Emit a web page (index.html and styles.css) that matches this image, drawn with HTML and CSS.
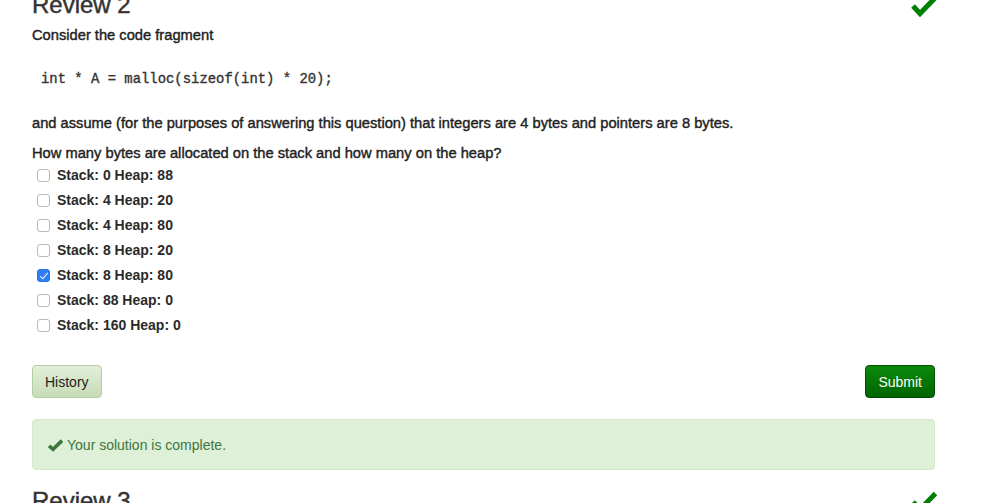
FILE: index.html
```html
<!DOCTYPE html>
<html>
<head>
<meta charset="utf-8">
<link rel="stylesheet" href="styles.css">
</head>
<body>
<div class="page">
  <section class="question">
    <div class="q-head">
      <h2 class="q-title">Review 2</h2>
      <svg class="done-icon" width="26" height="26" viewBox="0 0 26 26"><polyline points="2,14 9,21.5 24.5,5.5" fill="none" stroke="#008000" stroke-width="5" stroke-linejoin="miter"/></svg>
    </div>
    <p class="lead">Consider the code fragment</p>
    <pre class="code">int * A = malloc(sizeof(int) * 20);</pre>
    <p class="para">and assume (for the purposes of answering this question) that integers are 4 bytes and pointers are 8 bytes.</p>
    <p class="para ask">How many bytes are allocated on the stack and how many on the heap?</p>
    <div class="options">
      <label class="opt"><input type="checkbox"><span>Stack: 0 Heap: 88</span></label>
      <label class="opt"><input type="checkbox"><span>Stack: 4 Heap: 20</span></label>
      <label class="opt"><input type="checkbox"><span>Stack: 4 Heap: 80</span></label>
      <label class="opt"><input type="checkbox"><span>Stack: 8 Heap: 20</span></label>
      <label class="opt"><input type="checkbox" checked><span>Stack: 8 Heap: 80</span></label>
      <label class="opt"><input type="checkbox"><span>Stack: 88 Heap: 0</span></label>
      <label class="opt"><input type="checkbox"><span>Stack: 160 Heap: 0</span></label>
    </div>
    <div class="actions">
      <button class="btn btn-history">History</button>
      <button class="btn btn-submit">Submit</button>
    </div>
    <div class="alert">
      <svg class="alert-icon" width="15" height="13" viewBox="0 0 15 13"><polyline points="1,6.8 5,10.4 14,1.6" fill="none" stroke="#3c763d" stroke-width="3.6"/></svg>
      <span>Your solution is complete.</span>
    </div>
  </section>
  <section class="question">
    <div class="q-head">
      <h2 class="q-title">Review 3</h2>
      <svg class="done-icon" width="26" height="26" viewBox="0 0 26 26"><polyline points="2,14 9,21.5 24.5,5.5" fill="none" stroke="#008000" stroke-width="5" stroke-linejoin="miter"/></svg>
    </div>
  </section>
</div>
</body>
</html>
```
FILE: styles.css
```css
html, body {
  margin: 0;
  padding: 0;
  background: #fff;
}
body {
  font-family: "Liberation Sans", Arial, sans-serif;
  color: #333;
  font-size: 14px;
  line-height: 20px;
  overflow: hidden;
}
.page {
  width: 903px;
  margin: -8px 0 0 32px;
}
.q-head {
  display: flex;
  justify-content: space-between;
  align-items: flex-start;
}
.q-title {
  margin: 0;
  font-size: 24px;
  line-height: 26.4px;
  font-weight: normal;
  color: #333;
  -webkit-text-stroke: 0.45px #333;
}
.done-icon {
  display: block;
  margin-right: -2px;
}
.lead {
  margin: 7px 0 0;
  font-size: 14.7px;
  color: #222;
  -webkit-text-stroke: 0.4px #222;
}
.code {
  margin: 14px 0 0;
  padding: 10px 9px;
  font-family: "Liberation Mono", "Courier New", monospace;
  font-size: 13.9px;
  line-height: 20px;
  color: #333;
  -webkit-text-stroke: 0.35px #333;
}
.para {
  margin: 14px 0 0;
  font-size: 14.7px;
  color: #222;
  -webkit-text-stroke: 0.4px #222;
}
.ask {
  margin-top: 10px;
}
.options {
  margin-top: 2px;
  display: flex;
  flex-direction: column;
  gap: 5px;
}
.opt {
  display: flex;
  align-items: center;
  height: 20px;
  font-weight: bold;
  font-size: 14px;
  color: #2a2a2a;
}
.opt input {
  appearance: none;
  -webkit-appearance: none;
  margin: 0 7px 0 5px;
  width: 13px;
  height: 13px;
  border: 1px solid #b9b9b9;
  border-radius: 3px;
  background: #fff;
  box-sizing: border-box;
  position: relative;
}
.opt input:checked {
  background: #2f7ef5;
  border-color: #2a72e0;
}
.opt input:checked::after {
  content: "";
  position: absolute;
  left: 3.5px;
  top: 1px;
  width: 3px;
  height: 7px;
  border: solid #fff;
  border-width: 0 1.5px 1.5px 0;
  transform: rotate(40deg);
}
.actions {
  margin-top: 30px;
  display: flex;
  justify-content: space-between;
}
.btn {
  font-family: "Liberation Sans", Arial, sans-serif;
  font-size: 14px;
  line-height: 19px;
  padding: 7px 12px 5px;
  border-radius: 4px;
  border: 1px solid;
  cursor: pointer;
}
.btn-history {
  color: #222;
  background: linear-gradient(#e3efda, #c6dcb6);
  border-color: #b2cda2;
}
.btn-submit {
  color: #fff;
  background: linear-gradient(#0b8a0b, #016401);
  border-color: #004f00;
}
.alert {
  margin-top: 21px;
  padding: 16px 15px 14px;
  line-height: 19px;
  font-size: 14px;
  background: #dff0d8;
  border: 1px solid #d6e9c6;
  border-radius: 4px;
  color: #3c763d;
  display: flex;
  align-items: center;
  gap: 4px;
}
.alert-icon {
  display: block;
}
.question + .question {
  margin-top: 18px;
}
```
